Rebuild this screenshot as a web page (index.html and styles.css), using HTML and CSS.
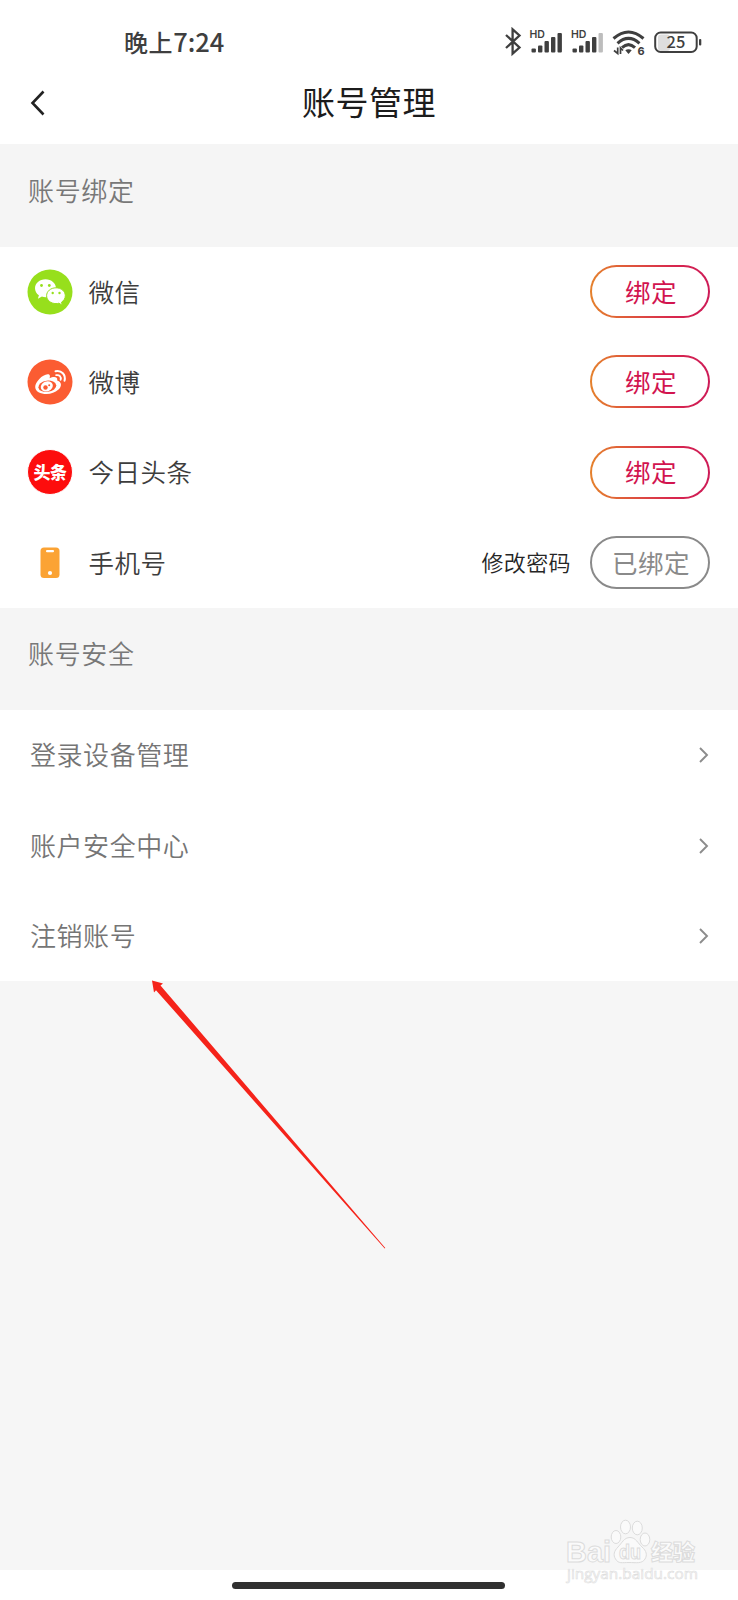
FILE: index.html
```html
<!DOCTYPE html>
<html lang="zh-CN">
<head>
<meta charset="utf-8">
<title>账号管理</title>
<link rel="stylesheet" href="styles.css">
</head>
<body>
<div class="screen">
  <header class="top">
    <div class="status">
      <span class="time">晚上<span class="digits">7:24</span></span>
      <svg class="status-icons" width="204" height="34" viewBox="0 0 204 34">
        <g fill="none" stroke="#3f3f3f" stroke-width="2.300">
          <path d="M2 8 L15.500 20.500 L8.600 26.700 V2.300 L15.500 8.500 L2 21"/>
        </g>
        <g fill="#3f3f3f">
          <text class="hd" x="25.500" y="11">HD</text>
          <rect x="27.500" y="21.500" width="4.400" height="4" rx="1"/>
          <rect x="34" y="18.500" width="4.400" height="7" rx="1"/>
          <rect x="40.500" y="14" width="4.400" height="11.500" rx="1"/>
          <rect x="47" y="10" width="4.400" height="15.500" rx="1"/>
          <rect x="53.500" y="6" width="4.400" height="19.500" rx="1"/>
          <text class="hd" x="67" y="11">HD</text>
          <rect x="68.500" y="21.500" width="4.400" height="4" rx="1"/>
          <rect x="75" y="18.500" width="4.400" height="7" rx="1"/>
          <rect x="81.500" y="14" width="4.400" height="11.500" rx="1"/>
          <rect x="88" y="10" width="4.400" height="15.500" rx="1"/>
          <rect x="94.500" y="6" width="4.400" height="19.500" rx="1" fill="#bdbdbd"/>
        </g>
        <g fill="none" stroke="#3f3f3f" stroke-width="3">
          <path d="M109.500 11.500 Q124.500 -1.500 139.500 11.500"/>
          <path d="M113.500 16.300 Q124.500 6.500 135.500 16.300"/>
          <path d="M118 20.600 Q124.500 14.500 131 20.600"/>
        </g>
        <path d="M121.300 23.300 Q124.500 21 127.700 23.300 L124.500 27Z" fill="#3f3f3f"/>
        <path d="M113.700 20.500 V26.500 L110 23.500 M116.500 27 V20.800 L119 23.500" fill="none" stroke="#3f3f3f" stroke-width="1.700"/>
        <text class="six" x="133.500" y="27.500">6</text>
        <rect x="154" y="7.500" width="12" height="16.500" rx="3" fill="#dedede"/>
        <rect x="151.200" y="5.500" width="41.500" height="19.500" rx="5.500" fill="none" stroke="#3f3f3f" stroke-width="2"/>
        <rect x="195" y="12" width="2.300" height="6.500" rx="1" fill="#3f3f3f"/>
        <text class="level" x="172" y="21" text-anchor="middle">25</text>
      </svg>
    </div>
    <div class="nav">
      <svg class="back" width="16" height="28" viewBox="0 0 16 28"><path d="M13.500 2.500 L2.500 14 L13.500 25.500" fill="none" stroke="#222" stroke-width="2.600"/></svg>
      <h1 class="title">账号管理</h1>
    </div>
  </header>

  <h2 class="section">账号绑定</h2>
  <ul class="list">
    <li class="row">
      <svg class="logo" width="46" height="46" viewBox="0 0 46 46">
        <circle cx="23" cy="23" r="22.500" fill="#97df1c"/>
        <path d="M18.500 10.300c-6 0-10.500 4-10.500 9 0 2.900 1.500 5.400 3.900 7l-1 3.500 4-2.200c1.200.4 2.400.6 3.600.6 6 0 10.500-4 10.500-8.900s-4.500-9-10.500-9z" fill="#fff"/>
        <path d="M29 18.800c-5.300 0-9.400 3.500-9.400 7.900s4.100 7.900 9.400 7.900c1 0 2-.1 2.900-.4l3.400 2-.8-3c2.300-1.500 3.800-3.800 3.800-6.500 0-4.400-4.100-7.900-9.300-7.900z" fill="#fff" stroke="#97df1c" stroke-width="1"/>
        <g fill="#97df1c"><circle cx="14.500" cy="16.500" r="1.400"/><circle cx="22.300" cy="16.500" r="1.400"/><circle cx="25.700" cy="24" r="1.200"/><circle cx="32.500" cy="24" r="1.200"/></g>
      </svg>
      <span class="label">微信</span>
      <button class="pill"><span class="cap">绑定</span></button>
    </li>
    <li class="row">
      <svg class="logo" width="46" height="46" viewBox="0 0 46 46">
        <circle cx="23" cy="23" r="22.500" fill="#fb5c32"/>
        <path d="M8.200 28c0-5 7-12.500 12.500-12.800 2.500 0 2.500 2 1.900 4 3-1.400 8.500-2.200 7.600 2.200 5.300 1.500 4.400 6.600 1 9.400-3 2.500-7 4.200-11.700 4.200-6.100 0-11.300-2.500-11.300-7z" fill="#fff"/>
        <ellipse cx="20.300" cy="27.300" rx="9" ry="5.600" fill="#fb5c32" transform="rotate(-7 20.300 27.300)"/>
        <ellipse cx="19.800" cy="27.400" rx="6.200" ry="4.900" fill="#fff" transform="rotate(-22 19.800 27.400)"/>
        <circle cx="18.500" cy="28.500" r="2.200" fill="#fb5c32"/>
        <circle cx="22.200" cy="26.300" r="1" fill="#fb5c32"/>
        <g fill="none" stroke="#fff" stroke-linecap="round"><path d="M28.500 12.200c6-1.300 10.600 3.500 9 9.500" stroke-width="2"/><path d="M29.200 16.200c3.200-.7 5.300 1.700 4.400 4.600" stroke-width="1.800"/></g>
      </svg>
      <span class="label">微博</span>
      <button class="pill"><span class="cap">绑定</span></button>
    </li>
    <li class="row">
      <span class="logo toutiao">头条</span>
      <span class="label">今日头条</span>
      <button class="pill"><span class="cap">绑定</span></button>
    </li>
    <li class="row">
      <svg class="logo" width="46" height="46" viewBox="0 0 46 46">
        <rect x="13.500" y="7.500" width="19" height="30.500" rx="3.500" fill="#fba334"/>
        <rect x="19" y="10" width="8" height="2.200" rx="1" fill="#fff"/>
        <circle cx="23" cy="33" r="2.100" fill="#fff"/>
      </svg>
      <span class="label">手机号</span>
      <span class="change">修改密码</span>
      <button class="pill bound"><span class="cap">已绑定</span></button>
    </li>
  </ul>

  <h2 class="section">账号安全</h2>
  <ul class="list">
    <li class="row link"><span class="item">登录设备管理</span><svg class="chev" width="10" height="16" viewBox="0 0 10 16"><path d="M1 1 L8 8 L1 15" fill="none" stroke="#8c8c8c" stroke-width="1.900"/></svg></li>
    <li class="row link"><span class="item">账户安全中心</span><svg class="chev" width="10" height="16" viewBox="0 0 10 16"><path d="M1 1 L8 8 L1 15" fill="none" stroke="#8c8c8c" stroke-width="1.900"/></svg></li>
    <li class="row link"><span class="item">注销账号</span><svg class="chev" width="10" height="16" viewBox="0 0 10 16"><path d="M1 1 L8 8 L1 15" fill="none" stroke="#8c8c8c" stroke-width="1.900"/></svg></li>
  </ul>

  <div class="blank"></div>
  <footer class="home"><span class="bar"></span></footer>

  <svg class="arrow" width="240" height="274" viewBox="0 0 240 274"><path d="M2 0.500 L13 3.500 L10.500 5.500 L235.300 268 L234.700 268.600 L6 10.200 L4 12.500Z" fill="#f5231a"/></svg>

  <svg class="mark" width="150" height="80" viewBox="0 0 150 80">
    <g class="outline">
      <text class="brand" x="4" y="46.500" textLength="45" lengthAdjust="spacingAndGlyphs">Bai</text>
      <ellipse cx="54" cy="22" rx="4.800" ry="6.500"/>
      <ellipse cx="63.500" cy="12" rx="5" ry="6.800"/>
      <ellipse cx="75.300" cy="13" rx="5" ry="6.800"/>
      <ellipse cx="83" cy="24.500" rx="4.800" ry="6.500"/>
      <path d="M68 22.500c6 0 8 6 12 9.500 4.500 4 5.500 8 3 12-3 5-9 3.500-16 3.500s-10.500 1.500-13.500-3.500c-2.500-4-1.500-8 2.500-12 4-4 6-9.500 12-9.500z"/>
      <text class="du" x="57" y="43.500" textLength="22" lengthAdjust="spacingAndGlyphs">du</text>
      <text class="jy" x="89" y="44.500">经验</text>
    </g>
    <text class="site" x="5" y="64" textLength="131" lengthAdjust="spacingAndGlyphs">jingyan.baidu.com</text>
  </svg>
</div>
</body>
</html>
```

FILE: styles.css
```css
* { box-sizing: border-box; }
body {
  margin: 0;
  background: #fff;
  font-family: "Noto Sans CJK SC", sans-serif;
}
.screen {
  position: relative;
  width: 738px;
  height: 1600px;
  display: flex;
  flex-direction: column;
  overflow: hidden;
}
.top { height: 144px; background: #fff; }
.status {
  height: 84px;
  padding: 0 30px 0 124px;
  display: flex;
  align-items: center;
  justify-content: space-between;
}
.status-icons { margin-top: 4px; }
.time {
  padding-bottom: 1px;
  font-size: 24px;
  font-weight: 500;
  letter-spacing: 0.600px;
  line-height: 36px;
  color: #3f3f3f;
}
.digits { font-size: 25.500px; letter-spacing: 0; }
.hd { font: 600 10.500px Inter, sans-serif; }
.six { font: 700 11px Inter, sans-serif; fill: #3f3f3f; }
.level { font: 500 16.500px "Noto Sans CJK SC", sans-serif; fill: #3f3f3f; }
.nav {
  height: 38px;
  display: grid;
  grid-template-columns: 100px 1fr 100px;
  grid-template-rows: 38px;
  align-items: center;
}
.back { margin-left: 30px; }
.title {
  margin: 0;
  padding-bottom: 4px;
  font-size: 33px;
  line-height: 38px;
  font-weight: 400;
  letter-spacing: 0.500px;
  color: #1c1c1c;
  text-align: center;
}
.section {
  margin: 0;
  height: 102.500px;
  padding: 25.500px 28px 0;
  background: #f5f5f5;
  color: #787878;
  font-size: 26px;
  line-height: 40px;
  font-weight: 350;
  letter-spacing: 0.650px;
}
.list { margin: 0; padding: 0; list-style: none; background: #fff; }
.row {
  height: 90.300px;
  display: flex;
  align-items: center;
  padding: 0 28px 0 27px;
}
.logo { width: 46px; height: 46px; flex: none; }
.toutiao {
  border: 0.500px solid #fff;
  border-radius: 50%;
  background: #fd0d0d;
  color: #fff;
  font-size: 17px;
  font-weight: 900;
  line-height: 43px;
  letter-spacing: -0.500px;
  text-align: center;
}
.label {
  flex: 1;
  margin-left: 15.500px;
  padding-bottom: 3px;
  font-size: 25.500px;
  letter-spacing: 0.500px;
  font-weight: 350;
  color: #3d3d3d;
}
.change {
  margin-right: 19px;
  padding-bottom: 4px;
  font-size: 22px;
  letter-spacing: 0.400px;
  font-weight: 350;
  color: #252525;
}
.pill {
  width: 120px;
  height: 53px;
  padding: 0 0 0 2px;
  border: 2px solid transparent;
  border-radius: 27px;
  background: linear-gradient(#fff, #fff) padding-box,
              linear-gradient(90deg, #e5812c, #d8264e 70%, #cd1a57) border-box;
  font-family: inherit;
  font-size: 25.500px;
  letter-spacing: 0.500px;
  line-height: 38px;
  color: #d2144f;
}
.cap { display: block; padding-bottom: 2px; }
.bound { border-color: #8a8a8a; background: #fff; color: #8a8a8a; }
.link { justify-content: space-between; padding: 0 29px 0 30px; }
.item {
  padding-bottom: 3px;
  font-size: 26px;
  letter-spacing: 0.550px;
  font-weight: 350;
  color: #757575;
}
.blank { flex: 1; background: #f6f6f6; }
.home {
  height: 30px;
  padding-right: 2px;
  display: flex;
  justify-content: center;
  align-items: center;
  background: #fff;
}
.bar { width: 273px; height: 7px; border-radius: 4px; background: #303030; }
.arrow { position: absolute; left: 150px; top: 980px; }
.mark { position: absolute; left: 562px; top: 1515px; }
.outline { fill: #fafafa; stroke: #dcdcdc; stroke-width: 1; }
.brand { font: 700 29px "Liberation Sans", sans-serif; }
.du { font: 700 20px "Liberation Sans", sans-serif; }
.jy { font: 900 22px "Noto Sans CJK SC", sans-serif; }
.site { font: 400 15px "Open Sans", sans-serif; fill: #fbfbfb; stroke: #dedede; stroke-width: 0.600; }
```
